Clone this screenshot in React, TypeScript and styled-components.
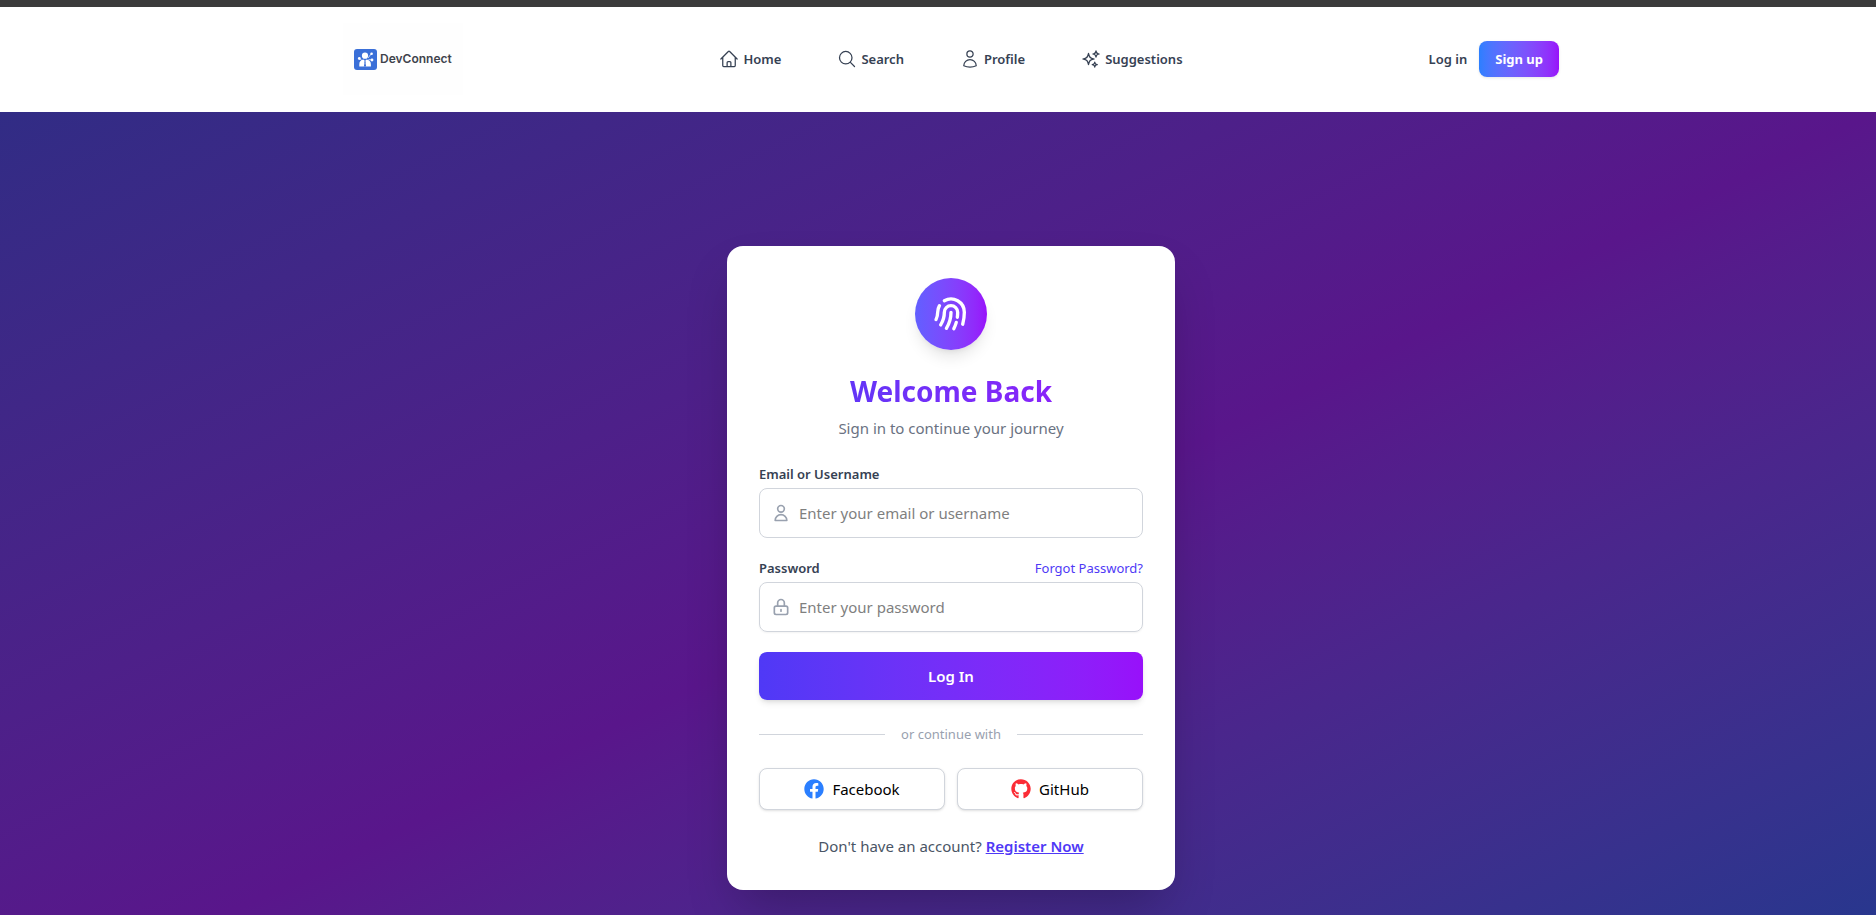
import React from 'react';
import styled, { createGlobalStyle, css } from 'styled-components';
import {
  HiOutlineHome,
  HiOutlineMagnifyingGlass,
  HiOutlineSparkles,
  HiOutlineUser as HiOutlineProfile,
} from 'react-icons/hi2';
import { HiOutlineFingerPrint, HiOutlineLockClosed, HiOutlineUser } from 'react-icons/hi';
import { FaFacebook, FaGithub } from 'react-icons/fa';

const GlobalStyle = createGlobalStyle`
  *, *::before, *::after { box-sizing: border-box; }
  body {
    margin: 0;
    background: #fff;
    font-family: 'Noto Sans', 'Open Sans', sans-serif;
    font-size: 15px;
    line-height: 24px;
    color: #000;
  }
  h1, p { margin: 0; }
  a { color: inherit; text-decoration: none; }
  button, input { font: inherit; }
  button { cursor: pointer; }
`;

const Shell = styled.div`
  height: 100vh;
  overflow: hidden auto;
  scrollbar-width: none;
`;

const Header = styled.header`
  display: flex;
  justify-content: center;
  padding: 0 0 1px 26px;
  background: #fff;
  border-top: 7px solid #3b3b3b;
`;

const HeaderInner = styled.div`
  flex: 1;
  display: grid;
  grid-template-columns: 1fr auto 1fr;
  align-items: center;
  max-width: 1216px;
  height: 104px;
`;

const LogoLink = styled.a`
  justify-self: start;
  display: flex;
  align-items: center;
  gap: 3px;
  height: 72px;
  padding: 0 11px;
  background: #fefefe;
  color: #3f434c;
  font: 600 12px/16px Inter, 'Liberation Sans', sans-serif;
`;

const Nav = styled.nav`
  display: flex;
  gap: 56px;
`;

const NavLink = styled.a`
  display: flex;
  align-items: center;
  gap: 4px;
  color: #364153;
  font-size: 13px;
  line-height: 20px;
  font-weight: 600;

  svg { width: 20px; height: 20px; }
`;

const Actions = styled.div`
  justify-self: end;
  display: flex;
  align-items: center;
  gap: 12px;
`;

const SignUpButton = styled.button`
  padding: 8px 16px;
  border: 0;
  border-radius: 8px;
  background: linear-gradient(to right in oklab, #2b7fff, #9810fa);
  box-shadow: 0 1px 3px rgba(0, 0, 0, 0.1);
  color: #fff;
  font-size: 13px;
  line-height: 20px;
  font-weight: 700;
`;

const Main = styled.main`
  display: flex;
  align-items: center;
  justify-content: center;
  min-height: calc(100vh - 3px);
  padding: 32px 16px 32px 42px;
  background: linear-gradient(to bottom right in oklab, #312c85, #59168b, #1c398e);
`;

const Card = styled.section`
  width: 100%;
  max-width: 448px;
  padding: 32px;
  border-radius: 16px;
  background: #fff;
  box-shadow: 0 25px 50px -12px rgba(0, 0, 0, 0.25);
`;

const Intro = styled.div`
  display: flex;
  flex-direction: column;
  align-items: center;
  gap: 7px;
  margin-bottom: 24px;
`;

const Badge = styled.div`
  display: grid;
  place-items: center;
  width: 72px;
  height: 72px;
  margin-bottom: 16px;
  border-radius: 50%;
  background: linear-gradient(to right in oklab, #615fff, #9810fa);
  box-shadow: 0 10px 15px -3px rgba(0, 0, 0, 0.1), 0 4px 6px -4px rgba(0, 0, 0, 0.1);
  color: #fff;

  svg { width: 40px; height: 40px; }
`;

const Title = styled.h1`
  align-self: stretch;
  background: linear-gradient(to right in oklab, #4f39f6, #9810fa);
  background-clip: text;
  color: transparent;
  font-size: 28px;
  line-height: 36px;
  font-weight: 700;
  text-align: center;
`;

const Subtitle = styled.p`
  color: #6a7282;
`;

const Form = styled.form`
  display: flex;
  flex-direction: column;
  gap: 20px;
`;

const Field = styled.div`
  display: flex;
  flex-direction: column;
  gap: 4px;
`;

const FieldHead = styled.div`
  display: flex;
  justify-content: space-between;
  font-size: 13px;
  line-height: 20px;
`;

const Label = styled.label`
  color: #364153;
  font-weight: 600;
`;

const ForgotLink = styled.a`
  color: #4f39f6;
`;

const InputBox = styled.div<{ $raised?: boolean }>`
  display: flex;
  align-items: center;
  gap: 8px;
  height: 50px;
  padding: 0 11px;
  border: 1px solid #d1d5dc;
  border-radius: 8px;
  color: #99a1af;
  ${({ $raised }) => $raised && css`box-shadow: 0 1px 2px rgba(0, 0, 0, 0.05);`}

  svg { flex: none; width: 20px; height: 20px; }
`;

const Input = styled.input`
  flex: 1;
  min-width: 0;
  padding: 0;
  border: 0;
  outline: 0;
  background: transparent;
  color: #000;

  &::placeholder { color: #7f7f7f; opacity: 1; }
`;

const SubmitButton = styled.button`
  height: 48px;
  border: 0;
  border-radius: 8px;
  background: linear-gradient(to right in oklab, #4f39f6, #9810fa);
  box-shadow: 0 4px 6px -1px rgba(0, 0, 0, 0.1), 0 2px 4px -2px rgba(0, 0, 0, 0.1);
  color: #fff;
  font-weight: 600;
`;

const Divider = styled.div`
  display: flex;
  align-items: center;
  gap: 16px;
  margin: 24px 0;
  color: #99a1af;
  font-size: 13px;
  line-height: 20px;

  &::before, &::after {
    content: '';
    flex: 1;
    height: 1px;
    background: #d1d5dc;
  }
`;

const SocialRow = styled.div`
  display: grid;
  grid-template-columns: 1fr 1fr;
  gap: 12px;
`;

const SocialButton = styled.button<{ $tint: string }>`
  display: flex;
  align-items: center;
  justify-content: center;
  gap: 8px;
  height: 42px;
  padding: 0;
  border: 1px solid #d1d5dc;
  border-radius: 8px;
  background: #fff;
  box-shadow: 0 1px 3px rgba(0, 0, 0, 0.1), 0 1px 2px -1px rgba(0, 0, 0, 0.1);
  color: #000;

  svg { width: 20px; height: 20px; color: ${({ $tint }) => $tint}; }
`;

const Register = styled.p`
  margin-top: 24px;
  color: #4a5565;
  text-align: center;

  a {
    color: #4f39f6;
    font-weight: 600;
    text-decoration: underline;
  }
`;

function LogoMark() {
  return (
    <svg width="23" height="21" viewBox="0 0 23 21" aria-hidden="true">
      <rect width="23" height="21" rx="3" fill="#3a6fd8" />
      <g stroke="#fff" strokeWidth="0.7">
        <path d="M5.5 9.5 8 11.5M14 9l3.500-4.500M14.500 10.500l3.500 0.500" />
      </g>
      <g fill="#fff">
        <circle cx="11" cy="6.700" r="3.100" />
        <circle cx="5.300" cy="9.500" r="1.400" />
        <circle cx="17.600" cy="4.800" r="1.300" />
        <circle cx="18" cy="11" r="1.400" />
        <path d="M5.300 17.500v-2.300c0-2.600 1.800-4.400 4-4.600l1.700 1.400 1.700-1.400c2.300.2 4.200 2 4.200 4.600v2.300z" />
      </g>
      <path d="m11 11.800.9 1.100-.4.800.6 3.800h-2.200l.6-3.800-.4-.8z" fill="#3a6fd8" />
    </svg>
  );
}

const navItems = [
  { label: 'Home', Icon: HiOutlineHome },
  { label: 'Search', Icon: HiOutlineMagnifyingGlass },
  { label: 'Profile', Icon: HiOutlineProfile },
  { label: 'Suggestions', Icon: HiOutlineSparkles },
];

export default function App() {
  return (
    <>
      <GlobalStyle />
      <Shell>
        <Header>
          <HeaderInner>
            <LogoLink href="#home">
              <LogoMark />
              DevConnect
            </LogoLink>
            <Nav>
              {navItems.map(({ label, Icon }) => (
                <NavLink key={label} href={`#${label.toLowerCase()}`}>
                  <Icon />
                  {label}
                </NavLink>
              ))}
            </Nav>
            <Actions>
              <NavLink href="#login">Log in</NavLink>
              <SignUpButton type="button">Sign up</SignUpButton>
            </Actions>
          </HeaderInner>
        </Header>
        <Main>
          <Card>
            <Intro>
              <Badge>
                <HiOutlineFingerPrint />
              </Badge>
              <Title>Welcome Back</Title>
              <Subtitle>Sign in to continue your journey</Subtitle>
            </Intro>
            <Form onSubmit={(event) => event.preventDefault()}>
              <Field>
                <FieldHead>
                  <Label htmlFor="identifier">Email or Username</Label>
                </FieldHead>
                <InputBox>
                  <HiOutlineUser />
                  <Input id="identifier" type="text" placeholder="Enter your email or username" />
                </InputBox>
              </Field>
              <Field>
                <FieldHead>
                  <Label htmlFor="password">Password</Label>
                  <ForgotLink href="#forgot">Forgot Password?</ForgotLink>
                </FieldHead>
                <InputBox $raised>
                  <HiOutlineLockClosed />
                  <Input id="password" type="password" placeholder="Enter your password" />
                </InputBox>
              </Field>
              <SubmitButton type="submit">Log In</SubmitButton>
            </Form>
            <Divider>or continue with</Divider>
            <SocialRow>
              <SocialButton type="button" $tint="#2b7fff">
                <FaFacebook />
                Facebook
              </SocialButton>
              <SocialButton type="button" $tint="#fb2c36">
                <FaGithub />
                GitHub
              </SocialButton>
            </SocialRow>
            <Register>
              Don't have an account? <a href="#register">Register Now</a>
            </Register>
          </Card>
        </Main>
      </Shell>
    </>
  );
}
